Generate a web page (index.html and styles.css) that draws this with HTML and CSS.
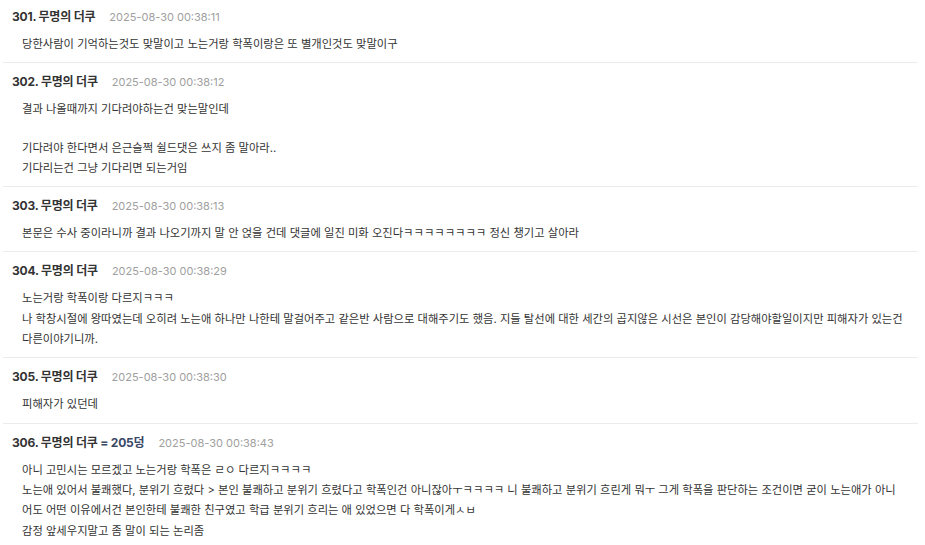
FILE: index.html
```html
<!DOCTYPE html>
<html lang="ko">
<head>
<meta charset="utf-8">
<title>댓글</title>
<link rel="stylesheet" href="styles.css">
</head>
<body>
<div class="comments">
  <div class="comment first">
    <div class="head"><span class="name">301. 무명의 더쿠</span><span class="date">2025-08-30 00:38:11</span></div>
    <div class="body"><p>당한사람이 기억하는것도 맞말이고 노는거랑 학폭이랑은 또 별개인것도 맞말이구</p></div>
  </div>
  <div class="comment">
    <div class="head"><span class="name">302. 무명의 더쿠</span><span class="date">2025-08-30 00:38:12</span></div>
    <div class="body"><p>결과 나올때까지 기다려야하는건 맞는말인데</p><p>기다려야 한다면서 은근슬쩍 쉴드댓은 쓰지 좀 말아라..
기다리는건 그냥 기다리면 되는거임</p></div>
  </div>
  <div class="comment">
    <div class="head"><span class="name">303. 무명의 더쿠</span><span class="date">2025-08-30 00:38:13</span></div>
    <div class="body"><p>본문은 수사 중이라니까 결과 나오기까지 말 안 얹을 건데 댓글에 일진 미화 오진다ㅋㅋㅋㅋㅋㅋㅋㅋ 정신 챙기고 살아라</p></div>
  </div>
  <div class="comment">
    <div class="head"><span class="name">304. 무명의 더쿠</span><span class="date">2025-08-30 00:38:29</span></div>
    <div class="body"><p>노는거랑 학폭이랑 다르지ㅋㅋㅋ
나 학창시절에 왕따였는데 오히려 노는애 하나만 나한테 말걸어주고 같은반 사람으로 대해주기도 했음. 지들 탈선에 대한 세간의 곱지않은 시선은 본인이 감당해야할일이지만 피해자가 있는건 다른이야기니까.</p></div>
  </div>
  <div class="comment">
    <div class="head"><span class="name">305. 무명의 더쿠</span><span class="date">2025-08-30 00:38:30</span></div>
    <div class="body"><p>피해자가 있던데</p></div>
  </div>
  <div class="comment last">
    <div class="head"><span class="name">306. 무명의 더쿠 <span class="reply">= 205덩</span></span><span class="date">2025-08-30 00:38:43</span></div>
    <div class="body"><p>아니 고민시는 모르겠고 노는거랑 학폭은 ㄹㅇ 다르지ㅋㅋㅋㅋ
노는애 있어서 불쾌했다, 분위기 흐렸다 &gt; 본인 불쾌하고 분위기 흐렸다고 학폭인건 아니잖아ㅜㅋㅋㅋㅋ 니 불쾌하고 분위기 흐린게 뭐ㅜ 그게 학폭을 판단하는 조건이면 굳이 노는애가 아니어도 어떤 이유에서건 본인한테 불쾌한 친구였고 학급 분위기 흐리는 애 있었으면 다 학폭이게ㅅㅂ
감정 앞세우지말고 좀 말이 되는 논리좀</p></div>
  </div>
</div>
</body>
</html>
```
FILE: styles.css
```css
html, body {
  margin: 0;
  padding: 0;
  background: #ffffff;
}
body {
  font-family: Inter, "Noto Sans CJK KR", sans-serif;
  color: #333333;
}
.comments {
  margin-left: 3px;
  width: 915px;
}
.comment {
  padding: 9px 0 8px;
  border-bottom: 1px solid #ececec;
}
.comment.first {
  padding-top: 7px;
}
.comment.last {
  border-bottom: none;
}
.head {
  display: flex;
  align-items: baseline;
  gap: 14px;
  padding-left: 9px;
  line-height: 20px;
  height: 20px;
}
.name {
  font-size: 12px;
  font-weight: 700;
  color: #333333;
  letter-spacing: -0.2px;
}
.reply {
  color: #3a4866;
}
.date {
  font-size: 11px;
  color: #a0a0a0;
  letter-spacing: 0;
}
.body {
  margin-top: 7px;
  padding-left: 19px;
  padding-right: 13px;
  font-size: 11.3px;
  line-height: 20.3px;
  letter-spacing: 0;
  color: #333333;
}
.body p {
  margin: 0;
  white-space: pre-line;
}
.body p + p {
  margin-top: 18px;
}
```
